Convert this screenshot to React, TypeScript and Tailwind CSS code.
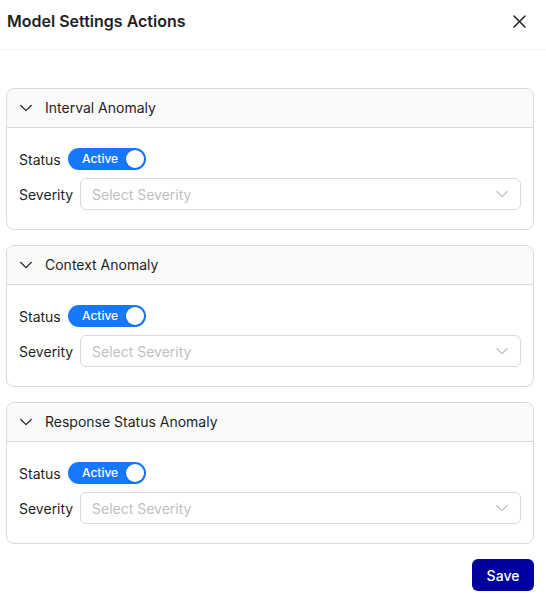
import React from "react";

function Chevron({ className }: { className?: string }) {
  return (
    <svg className={className} width="12" height="12" viewBox="0 0 12 12" fill="none">
      <path d="M0.8 3.5 L6 8.7 L11.2 3.5" stroke="currentColor" strokeWidth="1.2" strokeLinecap="round" strokeLinejoin="round" />
    </svg>
  );
}

function Section({ title }: { title: string }) {
  return (
    <div className="border border-[#d9d9d9] rounded-lg overflow-hidden">
      <div className="h-[39px] bg-[#fafafa] border-b border-[#d9d9d9] flex items-center pl-[13px] pb-[1px] text-[#1f1f1f]">
        <Chevron className="text-[#1f1f1f]" />
        <span className="ml-[13px] text-[14px]">{title}</span>
      </div>
      <div className="px-[12px] pt-[20px] pb-[19px] flex flex-col gap-[8px]">
        <div className="flex items-center h-[22px]">
          <span className="text-[14px] text-[#1f1f1f] w-[49px]">Status</span>
          <div className="relative w-[78px] h-[22px] rounded-full bg-[#1677ff] flex items-center">
            <span className="pl-[14px] text-[12px] text-white font-medium">Active</span>
            <span className="absolute right-[2px] top-[2px] w-[18px] h-[18px] rounded-full bg-white shadow-sm" />
          </div>
        </div>
        <div className="flex items-center">
          <span className="text-[14px] text-[#1f1f1f] w-[61px]">Severity</span>
          <div className="flex-1 h-[32px] border border-[#d9d9d9] rounded-md flex items-center justify-between pl-[11px] pr-[12px]">
            <span className="text-[14px] text-[#bfbfbf]">Select Severity</span>
            <Chevron className="text-[#bfbfbf]" />
          </div>
        </div>
      </div>
    </div>
  );
}

export default function App() {
  return (
    <div className="w-[546px] h-[598px] bg-white" style={{ fontFamily: "Inter, 'Noto Sans', sans-serif" }}>
      <div className="h-[50px] border-b border-[#f0f0f0] flex items-start justify-between pl-[7px] pr-[20px] pt-[9px]">
        <span className="text-[16px] font-semibold text-[#1f1f1f] leading-[24px]">Model Settings Actions</span>
        <svg className="mt-[6px]" width="13" height="13" viewBox="0 0 13 13" fill="none">
          <path d="M1 1 L12 12 M12 1 L1 12" stroke="#1f1f1f" strokeWidth="1.5" strokeLinecap="round" />
        </svg>
      </div>
      <div className="pl-[6px] pr-[12px] pt-[38px] flex flex-col gap-[15px]">
        <Section title="Interval Anomaly" />
        <Section title="Context Anomaly" />
        <Section title="Response Status Anomaly" />
        <div className="flex justify-end">
          <button className="w-[62px] h-[32px] rounded-md bg-[#00009c] text-white text-[14px] font-medium">Save</button>
        </div>
      </div>
    </div>
  );
}
